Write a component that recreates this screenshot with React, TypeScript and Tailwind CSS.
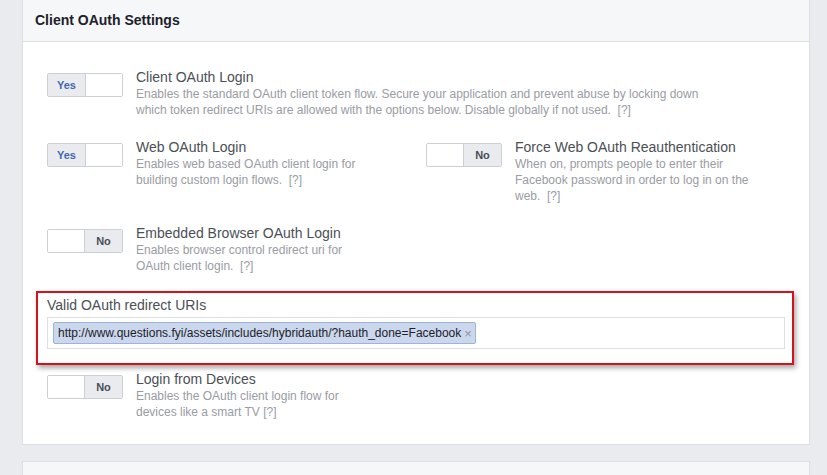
import React from 'react';

function Toggle({ on }: { on: boolean }) {
  return (
    <div className="flex h-[24px] w-[76px] shrink-0 overflow-hidden rounded-[2px] border border-[#ccd0d5] bg-white text-[11px] font-bold">
      {on ? (
        <>
          <div className="flex w-[38px] items-center justify-center border-r border-[#ccd0d5] bg-[#e9ebee] text-[#4267b2]">Yes</div>
          <div className="flex-1 bg-white" />
        </>
      ) : (
        <>
          <div className="flex-1 bg-white" />
          <div className="flex w-[38px] items-center justify-center border-l border-[#ccd0d5] bg-[#e9ebee] text-[#4b4f56]">No</div>
        </>
      )}
    </div>
  );
}

function Setting({ on, title, lines }: { on: boolean; title: string; lines: string[] }) {
  return (
    <div className="flex items-start">
      <div className="mt-[5px]">
        <Toggle on={on} />
      </div>
      <div className="ml-[13px]">
        <div className="text-[14px] leading-[18px] text-[#4b4f56]">{title}</div>
        <div className="text-[12px] leading-[16px] text-[#999ca3]">
          {lines.map((l, i) => (
            <div key={i} className="whitespace-pre">{l}</div>
          ))}
        </div>
      </div>
    </div>
  );
}

export default function App() {
  return (
    <div className="h-[475px] overflow-hidden bg-[#e9ebee] pl-[22px] font-['Liberation_Sans',Arial,sans-serif]">
      <div className="w-[788px] border-x border-b border-[#dddfe2] bg-white">
        <div className="h-[42px] border-b border-[#dddfe2] bg-[#f6f7f9] pl-[12px] pt-[8px]">
          <span className="text-[14px] font-bold leading-[18px] text-[#1d2129]">Client OAuth Settings</span>
        </div>

        <div className="pb-[24px] pl-[24px] pt-[26px]">
          <Setting
            on
            title="Client OAuth Login"
            lines={[
              'Enables the standard OAuth client token flow. Secure your application and prevent abuse by locking down',
              'which token redirect URIs are allowed with the options below. Disable globally if not used.  [?]',
            ]}
          />

          <div className="mt-[20px] grid grid-cols-[379px_1fr]">
            <Setting
              on
              title="Web OAuth Login"
              lines={['Enables web based OAuth client login for', 'building custom login flows.  [?]']}
            />
            <Setting
              on={false}
              title="Force Web OAuth Reauthentication"
              lines={[
                'When on, prompts people to enter their',
                'Facebook password in order to log in on the',
                'web.  [?]',
              ]}
            />
          </div>

          <div className="mt-[20px]">
            <Setting
              on={false}
              title="Embedded Browser OAuth Login"
              lines={['Enables browser control redirect uri for', 'OAuth client login.  [?]']}
            />
          </div>

          <div className="-ml-[11px] mt-[17px] w-[758px] border-2 border-[#d3121c] pb-[14px] pl-[9px] pt-[3px] shadow-[2px_3px_5px_rgba(0,0,0,0.35)]">
            <div className="text-[14px] leading-[18px] text-[#4b4f56]">Valid OAuth redirect URIs</div>
            <div className="mt-[3px] flex h-[32px] w-[738px] items-center border border-[#dddfe2] bg-white pl-[5px]">
              <div className="flex h-[22px] items-center rounded-[2px] border border-[#9cb4d8] bg-[#cad7ec] pl-[4px] pr-[3px] text-[12px] text-[#1d2129]">
                <span>http://www.questions.fyi/assets/includes/hybridauth/?hauth_done=Facebook</span>
                <span className="ml-[3px] text-[13px] font-normal leading-none text-[#90949c]">×</span>
              </div>
            </div>
          </div>

          <div className="mt-[5px]">
            <Setting
              on={false}
              title="Login from Devices"
              lines={['Enables the OAuth client login flow for', 'devices like a smart TV [?]']}
            />
          </div>
        </div>
      </div>

      <div className="mt-[16px] h-[40px] w-[788px] border border-[#dddfe2] bg-[#f6f7f9]" />
    </div>
  );
}
